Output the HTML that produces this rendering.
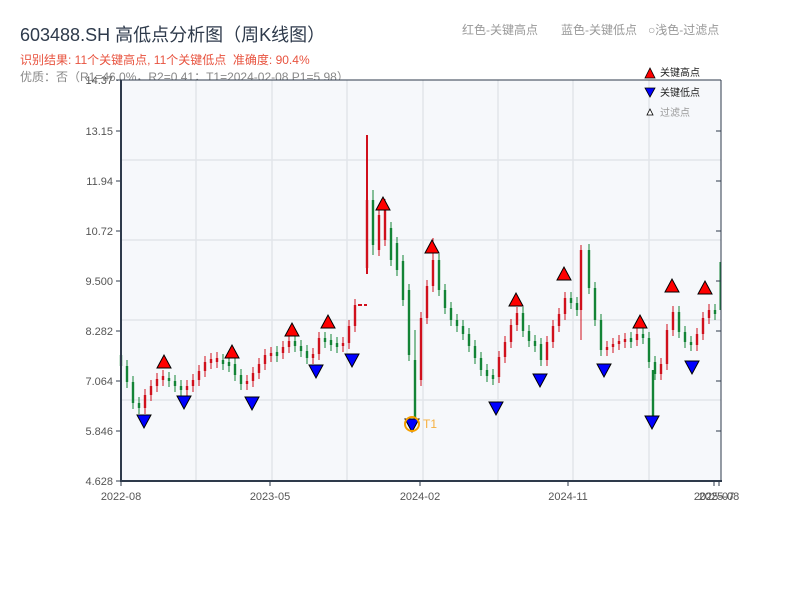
<!DOCTYPE html>
<html><head><meta charset="utf-8"><style>
body{margin:0;width:800px;height:600px;background:#fff;font-family:"Liberation Sans","Noto Sans CJK SC",sans-serif;overflow:hidden;position:relative}
.t{position:absolute;white-space:nowrap}
svg text{font-family:"Liberation Sans","Noto Sans CJK SC",sans-serif}
</style></head><body>
<div class="t" style="left:20px;top:21px;font-size:18px;color:#2e3a4b">603488.SH 高低点分析图（周K线图）</div>
<div class="t" style="left:20px;top:51px;font-size:12px;color:#e8533f">识别结果: 11个关键高点, 11个关键低点&nbsp;&nbsp;准确度: 90.4%</div>
<div class="t" style="left:20px;top:68px;font-size:12px;color:#888">优质：否（R1=46.0%，R2=0.41；T1=2024-02-08 P1=5.98）</div>
<div class="t" style="left:462px;top:21px;font-size:12px;color:#999">红色-关键高点</div>
<div class="t" style="left:561px;top:21px;font-size:12px;color:#999">蓝色-关键低点</div>
<div class="t" style="left:648px;top:21px;font-size:12px;color:#999">○浅色-过滤点</div>
<svg width="800" height="600" style="position:absolute;left:0;top:0" xmlns="http://www.w3.org/2000/svg">
<rect x="121" y="80" width="600" height="401" fill="#f6f8fb"/>
<g stroke="#e2e5ea" stroke-width="1.5">
<line x1="121" x2="721" y1="160" y2="160"/><line x1="121" x2="721" y1="240" y2="240"/><line x1="121" x2="721" y1="320" y2="320"/><line x1="121" x2="721" y1="400" y2="400"/>
<line x1="196" x2="196" y1="80" y2="481"/><line x1="272" x2="272" y1="80" y2="481"/><line x1="347" x2="347" y1="80" y2="481"/><line x1="423" x2="423" y1="80" y2="481"/><line x1="498" x2="498" y1="80" y2="481"/><line x1="573" x2="573" y1="80" y2="481"/><line x1="649" x2="649" y1="80" y2="481"/>
</g>
<!-- green candles -->
<path fill="none" stroke="#138436" stroke-width="2.4" d="M121 355V366M127 366V382M133 382V403M139 403V408M169 378V381M175 381V386M181 386V390M223 360V364M229 362V366M235 364V375M241 375V384M277 352V356M295 341V346M301 346V351M307 351V358M325 338V342M331 340V345M337 343V347M373 200V245M391 228V260M397 243V270M403 261V300M409 290V355M415 360V420M439 260V290M445 290V308M451 308V320M457 320V326M463 326V334M469 334V346M475 346V358M481 358V370M487 370V376M493 375V379M523 313V331M529 331V341M535 341V346M541 344V360M571 298V303M577 303V310M589 250V288M595 288V320M601 320V350M631 338V342M643 334V338M649 338V362M653 370V416M655 362V374M679 312V332M685 332V342M691 342V345M715 310V314"/>
<path fill="none" stroke="#138436" stroke-width="1" d="M121 349V372M127 360V388M133 376V409M139 397V414M169 372V387M175 375V392M181 380V396M223 354V370M229 356V372M235 358V381M241 369V390M277 346V362M295 335V352M301 340V357M307 345V364M325 332V348M331 334V351M337 337V353M373 190V255M391 222V266M397 237V276M403 255V306M409 284V361M415 330V420M439 254V296M445 284V314M451 302V326M457 314V332M463 320V340M469 328V352M475 340V364M481 352V376M487 364V382M493 369V385M523 307V337M529 325V347M535 335V352M541 338V366M571 292V309M577 297V316M589 244V294M595 282V326M601 314V356M631 332V348M643 328V344M649 332V368M655 356V380M679 306V338M685 326V348M691 336V351M715 304V320M720 262V310"/>
<!-- red candles -->
<path fill="none" stroke="#d0101c" stroke-width="2.4" d="M145 395V408M151 386V395M157 379V386M163 376V380M187 386V390M193 380V386M199 371V380M205 362V371M211 359V363M217 358V362M247 381V384M253 373V381M259 364V373M265 355V364M271 353V356M283 347V353M289 341V347M313 354V358M319 338V354M343 343V346M349 326V343M355 305V326M367 200V268M379 215V250M385 205V240M421 318V380M427 286V318M433 260V286M499 357V377M505 342V357M511 325V342M517 313V325M547 342V360M553 326V342M559 314V326M565 298V314M581 250V310M607 347V350M613 344V347M619 341V344M625 339V342M637 334V340M661 364V374M667 330V364M673 312V330M697 334V345M703 318V334M709 310V318"/>
<path fill="none" stroke="#d0101c" stroke-width="1" d="M145 389V414M151 380V401M157 373V392M163 370V386M187 380V396M193 374V392M199 365V386M205 356V377M211 353V369M217 352V368M247 375V390M253 367V387M259 358V379M265 349V370M271 347V362M283 341V359M289 335V353M313 348V364M319 332V360M343 337V352M349 320V349M355 299V332M379 209V256M385 199V246M421 312V386M427 280V324M433 238V292M499 351V383M505 336V363M511 319V348M517 307V331M547 336V366M553 320V348M559 308V332M565 292V320M581 245V340M607 341V356M613 338V353M619 335V350M625 333V348M637 328V346M661 358V380M667 324V370M673 306V336M697 328V351M703 312V340M709 304V324"/>
<path stroke="#d0101c" stroke-width="2" d="M367 135V274M358 305H362M364 305H367"/>
<!-- markers -->
<g fill="#f00" stroke="#000" stroke-width="1">
<polygon points="157,368 171,368 164,355"/><polygon points="225,358 239,358 232,345"/><polygon points="285,336 299,336 292,323"/><polygon points="321,328 335,328 328,315"/><polygon points="376,210 390,210 383,197"/><polygon points="425,253 439,253 432,240"/><polygon points="509,306 523,306 516,293"/><polygon points="557,280 571,280 564,267"/><polygon points="633,328 647,328 640,315"/><polygon points="665,292 679,292 672,279"/><polygon points="698,294 712,294 705,281"/>
</g>
<g fill="#00f" stroke="#000" stroke-width="1">
<polygon points="137,415 151,415 144,428"/><polygon points="177,396 191,396 184,409"/><polygon points="245,397 259,397 252,410"/><polygon points="309,365 323,365 316,378"/><polygon points="345,354 359,354 352,367"/><polygon points="405,419 419,419 412,432"/><polygon points="489,402 503,402 496,415"/><polygon points="533,374 547,374 540,387"/><polygon points="597,364 611,364 604,377"/><polygon points="645,416 659,416 652,429"/><polygon points="685,361 699,361 692,374"/>
</g>
<circle cx="412" cy="424" r="7" fill="none" stroke="#f5a000" stroke-width="2"/>
<text x="423" y="428" font-size="12" fill="#f5b040">T1</text>
<!-- axes -->
<g stroke="#2e3a4b">
<line x1="121" x2="721" y1="80" y2="80" stroke-width="1"/><line x1="121" x2="121" y1="80" y2="482" stroke-width="2"/><line x1="120" x2="722" y1="481" y2="481" stroke-width="2"/><line x1="721" x2="721" y1="80" y2="482" stroke-width="1"/>
<path d="M116 80H121M116 131H121M116 181H121M116 231H121M116 281H121M116 331H121M116 381H121M116 431H121M116 481H121M716 80H721M716 131H721M716 181H721M716 231H721M716 281H721M716 331H721M716 381H721M716 431H721M121 481V486M270 481V486M420 481V486M568 481V486M714 481V486M719 481V486"/>
</g>
<g font-size="11" fill="#555" text-anchor="end">
<text x="113" y="84">14.37</text><text x="113" y="135">13.15</text><text x="113" y="185">11.94</text><text x="113" y="235">10.72</text><text x="113" y="285">9.500</text><text x="113" y="335">8.282</text><text x="113" y="385">7.064</text><text x="113" y="435">5.846</text><text x="113" y="485">4.628</text>
</g>
<g font-size="11" fill="#555" text-anchor="middle">
<text x="121" y="500">2022-08</text><text x="270" y="500">2023-05</text><text x="420" y="500">2024-02</text><text x="568" y="500">2024-11</text><text x="714" y="500">2025-07</text><text x="719" y="500">2025-08</text>
</g>
<polygon points="645,78 655,78 650,68" fill="#f00" stroke="#000" stroke-width="0.8"/><text x="660" y="76" font-size="10" fill="#222">关键高点</text>
<polygon points="645,88 655,88 650,97" fill="#00f" stroke="#000" stroke-width="0.8"/><text x="660" y="96" font-size="10" fill="#222">关键低点</text>
<polygon points="647,115 653,115 650,109" fill="#fff" stroke="#000" stroke-width="0.8"/><text x="660" y="116" font-size="10" fill="#999">过滤点</text>
</svg>
</body></html>
